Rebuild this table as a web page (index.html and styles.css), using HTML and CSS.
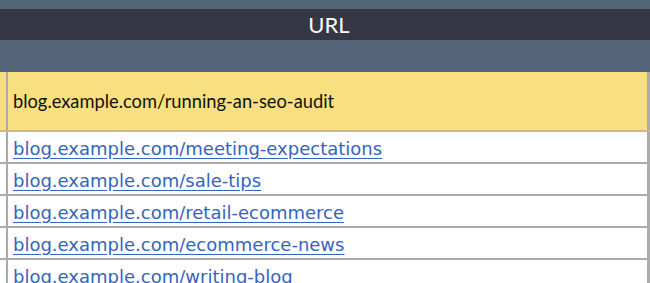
FILE: index.html
```html
<!DOCTYPE html>
<html>
<head>
<meta charset="utf-8">
<link rel="stylesheet" href="styles.css">
</head>
<body>
<div class="sheet">
  <div class="band band-top"></div>
  <div class="title">URL</div>
  <div class="band band-sub"></div>
  <div class="row row-hl">
    <div class="gutter"></div>
    <div class="cell"><span class="plain">blog.example.com/running-an-seo-audit</span></div>
  </div>
  <div class="row">
    <div class="gutter"></div>
    <div class="cell"><a class="link" href="#">blog.example.com/meeting-expectations</a></div>
  </div>
  <div class="row">
    <div class="gutter"></div>
    <div class="cell"><a class="link" href="#">blog.example.com/sale-tips</a></div>
  </div>
  <div class="row">
    <div class="gutter"></div>
    <div class="cell"><a class="link" href="#">blog.example.com/retail-ecommerce</a></div>
  </div>
  <div class="row">
    <div class="gutter"></div>
    <div class="cell"><a class="link" href="#">blog.example.com/ecommerce-news</a></div>
  </div>
  <div class="row">
    <div class="gutter"></div>
    <div class="cell"><a class="link" href="#">blog.example.com/writing-blog</a></div>
  </div>
</div>
</body>
</html>
```

FILE: styles.css
```css
html, body {
  margin: 0;
  padding: 0;
  background: #ffffff;
  overflow: hidden;
}

.sheet {
  width: 650px;
  display: flex;
  flex-direction: column;
  font-family: Lato, "Noto Sans", sans-serif;
}

.band {
  background: #546579;
}

.band-top {
  height: 9px;
}

.band-sub {
  height: 32px;
}

.title {
  height: 31px;
  background: #353744;
  color: #ffffff;
  font-size: 22px;
  display: flex;
  align-items: center;
  justify-content: center;
  padding-left: 8px;
}

.row {
  display: flex;
  height: 30px;
  border-bottom: 2px solid #ababab;
}

.row-hl {
  height: 58px;
  background: #f8df7f;
  border-bottom-color: #c9bb86;
}

.gutter {
  width: 6px;
  border-right: 2px solid #ababab;
}

.cell {
  flex: 1;
  display: flex;
  align-items: center;
  padding-left: 5px;
  border-right: 3px solid #ababab;
}

.plain {
  font-size: 18.3px;
  color: #111111;
}

.link {
  font-family: "DejaVu Sans", sans-serif;
  font-size: 18px;
  color: #3563c1;
  text-decoration: underline;
  text-underline-offset: 3px;
  padding-top: 2px;
}
```
